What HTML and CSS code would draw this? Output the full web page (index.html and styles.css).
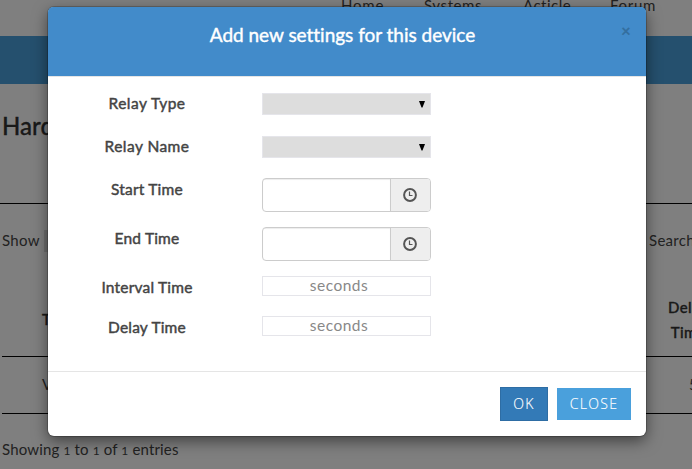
FILE: index.html
```html
<!DOCTYPE html>
<html lang="en">
<head>
<meta charset="utf-8">
<title>Device settings</title>
<link rel="stylesheet" href="styles.css">
</head>
<body>
<div class="page">
  <nav class="nav"><a class="n-home">Home</a><a class="n-systems">Systems</a><a class="n-article">Acticle</a><a class="n-forum">Forum</a></nav>
  <div class="band"></div>
  <h2 class="heading">Hardware</h2>
  <div class="tools"><span class="show">Show <i class="count"></i></span><span class="search">Search:</span></div>
  <div class="thead"><span class="type">Type</span><span class="delay">Delay<br>Time</span></div>
  <div class="trow"><span class="value">Valve</span><span class="five">5</span></div>
  <p class="info">Showing <span class="num">1</span> to <span class="num">1</span> of <span class="num">1</span> entries</p>
</div>
<div class="backdrop"></div>
<section class="modal">
  <header class="modal-header"><h4 class="title">Add new settings for this device</h4><button class="dismiss">×</button></header>
  <div class="modal-body">
    <div class="row select-row"><label class="l-wide">Relay Type</label><div class="select"><svg width="6" height="7" viewBox="0 0 6 7"><path d="M0 0h6L3.5 6.5h-1z"/></svg></div></div>
    <div class="row select-row second"><label class="l-wide">Relay Name</label><div class="select"><svg width="6" height="7" viewBox="0 0 6 7"><path d="M0 0h6L3.5 6.5h-1z"/></svg></div></div>
    <div class="row group-row"><label>Start Time</label><div class="group"><span class="field"></span><span class="addon"><svg width="14" height="14" viewBox="0 0 14 14"><circle cx="7" cy="7" r="5.9"/><path d="M6.5 3.5v4h3"/></svg></span></div></div>
    <div class="row group-row"><label>End Time</label><div class="group"><span class="field"></span><span class="addon"><svg width="14" height="14" viewBox="0 0 14 14"><circle cx="7" cy="7" r="5.9"/><path d="M6.5 3.5v4h3"/></svg></span></div></div>
    <div class="row text-row"><label>Interval Time</label><div class="seconds">seconds</div></div>
    <div class="row text-row"><label>Delay Time</label><div class="seconds">seconds</div></div>
  </div>
  <footer class="modal-footer"><button class="ok">OK</button><button class="close">CLOSE</button></footer>
</section>
</body>
</html>
```

FILE: styles.css
```css
* { box-sizing: border-box; }
body { margin: 0; width: 692px; height: 469px; overflow: hidden; font: 15px/24px Lato, sans-serif; color: #444; background: #fff; }
.page { height: 469px; overflow: hidden; }
.nav { height: 36px; display: flex; padding-left: 341px; line-height: 11px; }
.nav a { flex: none; }
.n-home { width: 83px; letter-spacing: .8px; }
.n-systems { width: 99px; letter-spacing: .6px; }
.n-article { width: 87px; letter-spacing: .5px; }
.n-forum { letter-spacing: .7px; }
.band { height: 48px; background: #4aa0dc; }
.heading { margin: 0; height: 120px; padding: 26px 0 0 2px; font-size: 24px; line-height: 31px; font-weight: 500; color: #333; -webkit-text-stroke: .3px #333; border-bottom: 1px solid #000; }
.tools { height: 83px; padding: 23px 0 0 2px; display: flex; line-height: 26px; letter-spacing: .3px; }
.show { flex: none; width: 647px; display: flex; }
.count { width: 70px; height: 22px; margin: 3px 0 0 4px; background: #ddd; }
.search { flex: none; }
.thead { margin: 0 0 0 2px; height: 70px; display: flex; border-bottom: 1px solid #000; color: #333; font-weight: 500; -webkit-text-stroke: .35px #333; line-height: 25px; letter-spacing: .4px; }
.type { flex: none; width: 661px; padding: 20px 0 0 40px; }
.delay { flex: none; width: 50px; padding-top: 8px; text-align: center; }
.trow { margin: 0 0 0 2px; height: 57px; display: flex; border-bottom: 1px solid #000; padding-top: 15px; }
.value { flex: none; width: 687px; padding-left: 40px; }
.five { flex: none; }
.info { margin: 0; padding: 23px 0 0 2px; letter-spacing: .15px; }
.num { font-size: 12px; }
.backdrop { position: absolute; inset: 0; background: rgba(0,0,0,.5); }
.modal { position: absolute; left: 48px; top: 7px; width: 598px; height: 429px; background: #fff; border-radius: 6px; box-shadow: 0 5px 15px rgba(0,0,0,.5), 0 0 0 1px rgba(0,0,0,.2); display: flex; flex-direction: column; }
.modal-header { height: 70px; background: #428bca; border-bottom: 1px solid #e5e5e5; border-radius: 5px 5px 0 0; display: flex; padding: 15px; }
.title { margin: 0; width: 558px; padding-left: 1px; text-align: center; font-size: 19px; line-height: 25px; font-weight: 400; letter-spacing: -.02px; font-variant-ligatures: none; color: #fff; -webkit-text-stroke: .4px #fff; }
button { font-family: Lato, sans-serif; border: 0; padding: 0; }
.dismiss { width: 10px; height: 18px; background: none; color: #346f9f; font-size: 17px; line-height: 18px; font-weight: 900; }
.modal-body { height: 294px; padding: 16px 0 0 39px; }
.row { display: grid; grid-template-columns: 120px 169px; column-gap: 55px; align-items: start; }
.row label { margin-top: -1px; text-align: center; font-size: 15.5px; font-weight: 400; letter-spacing: .2px; -webkit-text-stroke: .45px #444; }
.row .l-wide { letter-spacing: .45px; }
.select-row { height: 43px; line-height: 22px; }
.select-row.second { height: 42px; }
.group-row { height: 49px; }
.text-row { height: 40px; }
.select { height: 22px; background: #ddd; border: 1px solid #e5e5ea; display: flex; justify-content: flex-end; padding: 7px 5px 0 0; }
.select svg { fill: #000; }
.group { height: 34px; display: flex; border: 1px solid #ccc; border-radius: 4px; overflow: hidden; }
.field { width: 127px; box-shadow: inset 0 1px 1px rgba(0,0,0,.075); }
.addon { width: 40px; background: #eee; border-left: 1px solid #ccc; display: flex; align-items: center; justify-content: center; }
.addon svg { margin-right: 1px; fill: none; stroke: #555; stroke-width: 2; }
.addon path { stroke-width: 1.2; }
.seconds { height: 20px; border: 1px solid #e5e5ea; padding-right: 15px; text-align: center; font-size: 15.5px; line-height: 17px; color: #888; letter-spacing: .5px; }
.modal-footer { height: 65px; border-top: 1px solid #e5e5e5; padding: 15px 15px 0; display: flex; justify-content: flex-end; gap: 9px; }
.ok, .close { color: #fff; font: 300 14px/30px "Open Sans", sans-serif; letter-spacing: 1.3px; -webkit-text-stroke: .15px #fff; }
.ok { width: 48px; height: 34px; background: #337ab7; border: 1px solid #2e6da4; }
.close { width: 74px; height: 32px; margin-top: 1px; background: #4aa0dc; }
```
